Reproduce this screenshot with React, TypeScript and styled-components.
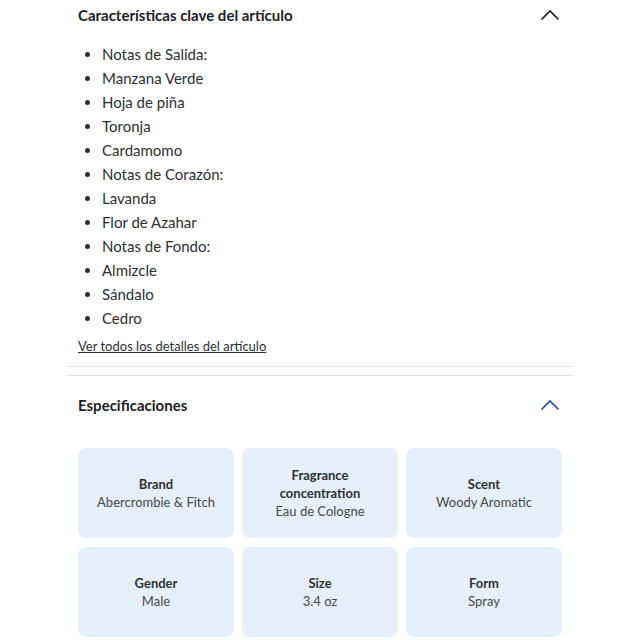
import * as React from "react";
import styled, { createGlobalStyle } from "styled-components";

const GlobalStyle = createGlobalStyle`
  body {
    margin: 0;
    background: #fff;
    font-family: "Lato", "Noto Sans", sans-serif;
    color: #2e2f32;
  }
`;

const Page = styled.div`
  width: 506px;
  margin: 0 auto;
`;

const Section = styled.section<{ $divider?: boolean }>`
  padding: 0 11px;
  border-bottom: ${(p) => (p.$divider ? "1px solid #e3e4e5" : "none")};
`;

const Header = styled.div<{ $height: number }>`
  display: flex;
  align-items: center;
  justify-content: space-between;
  height: ${(p) => p.$height}px;
`;

const Title = styled.h2`
  margin: 0;
  font-size: 15px;
  font-weight: 700;
  color: #1f2023;
`;

const Chevron = styled.svg`
  width: 20px;
  height: 12px;
  margin-right: 2px;
`;

const List = styled.ul`
  margin: 12px 0 0;
  padding-left: 24px;
  font-size: 15px;
  line-height: 24px;
`;

const Link = styled.a`
  display: inline-block;
  margin: 8px 0 12px;
  font-size: 13px;
  color: #2e2f32;
  text-decoration: underline;
`;

const Gap = styled.div`
  height: 8px;
  border-bottom: 1px solid #e3e4e5;
`;

const Grid = styled.div`
  display: grid;
  grid-template-columns: repeat(3, 1fr);
  gap: 9px 8px;
  padding-top: 14px;
`;

const Card = styled.div`
  display: flex;
  flex-direction: column;
  align-items: center;
  justify-content: center;
  height: 90px;
  padding: 0 12px;
  border-radius: 8px;
  background: #e8effc;
  text-align: center;
  font-size: 13px;
  line-height: 18px;
`;

const Label = styled.div`
  font-weight: 700;
  color: #2e2f32;
`;

const Value = styled.div`
  color: #46474a;
`;

const Up = ({ color }: { color: string }) => (
  <Chevron viewBox="0 0 20 12" fill="none">
    <path d="M1.5 10.5 L10 2 L18.5 10.5" stroke={color} strokeWidth="1.6" />
  </Chevron>
);

const notes = [
  "Notas de Salida:",
  "Manzana Verde",
  "Hoja de piña",
  "Toronja",
  "Cardamomo",
  "Notas de Corazón:",
  "Lavanda",
  "Flor de Azahar",
  "Notas de Fondo:",
  "Almizcle",
  "Sándalo",
  "Cedro",
];

const specs = [
  { label: "Brand", value: "Abercrombie & Fitch" },
  { label: "Fragrance concentration", value: "Eau de Cologne" },
  { label: "Scent", value: "Woody Aromatic" },
  { label: "Gender", value: "Male" },
  { label: "Size", value: "3.4 oz" },
  { label: "Form", value: "Spray" },
];

export default function App() {
  return (
    <Page>
      <GlobalStyle />
      <Section $divider>
        <Header $height={30}>
          <Title>Características clave del artículo</Title>
          <Up color="#1a1a1a" />
        </Header>
        <List>
          {notes.map((n) => (
            <li key={n}>{n}</li>
          ))}
        </List>
        <Link href="#">Ver todos los detalles del artículo</Link>
      </Section>
      <Gap />
      <Section>
        <Header $height={58}>
          <Title>Especificaciones</Title>
          <Up color="#1c4bb0" />
        </Header>
        <Grid>
          {specs.map((s) => (
            <Card key={s.label}>
              <Label>{s.label}</Label>
              <Value>{s.value}</Value>
            </Card>
          ))}
        </Grid>
      </Section>
    </Page>
  );
}
